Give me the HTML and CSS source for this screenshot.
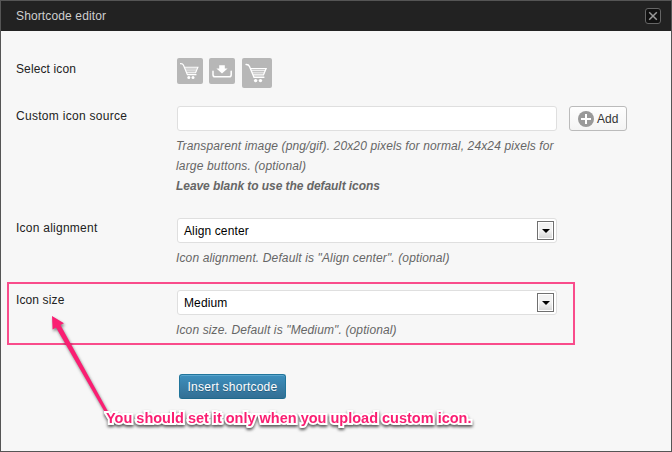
FILE: index.html
```html
<!DOCTYPE html>
<html lang="en">
<head>
<meta charset="utf-8">
<title>Shortcode editor</title>
<link rel="stylesheet" href="styles.css">
</head>
<body>
<svg class="defs" width="0" height="0" aria-hidden="true">
  <symbol id="cart" viewBox="0 0 26 26">
    <path d="M3.5 5.6q2.2-.2 3 1.7l3.9 9.4h8.6" fill="none" stroke="#fff" stroke-width="1.2" stroke-linecap="round"/>
    <path d="M7.3 9.2h13.6l-2.3 5.5H9.7" fill="none" stroke="#fff" stroke-width="1.1"/>
    <path d="M8 11h12.1M8.8 12.9h10.6" stroke="#fff" stroke-width=".8"/>
    <circle cx="11.8" cy="19.6" r="1.5" fill="#fff"/><circle cx="16" cy="19.6" r="1.5" fill="#fff"/>
  </symbol>
</svg>
<div class="dialog">
  <header class="titlebar">
    <span class="title">Shortcode editor</span>
    <button class="close" aria-label="Close"><svg width="14" height="14" viewBox="0 0 14 14"><path d="M3.2 3.2l7.6 7.6M10.8 3.2l-7.6 7.6" stroke="#999" stroke-width="1.5"/></svg></button>
  </header>
  <main class="form">
    <div class="row row-icons">
      <span class="label label-icons">Select icon</span>
      <div class="icons">
        <span class="tile"><svg width="26" height="26"><use href="#cart"/></svg></span>
        <span class="tile"><svg width="26" height="26" viewBox="0 0 26 26"><path d="M4 13.3v3.4q0 2.1 2.1 2.1h14q2.1 0 2.1-2.1v-3.4" fill="none" stroke="#fff" stroke-width="1.5" stroke-linecap="round"/><path d="M10.2 7.2h5.6v3.2h2.8L13 15.4l-5.6-5h2.8z" fill="#fff"/></svg></span>
        <span class="tile tile-large"><svg width="30" height="30"><use href="#cart"/></svg></span>
      </div>
    </div>
    <div class="row row-source">
      <span class="label label-source">Custom icon source</span>
      <div class="field">
        <div class="line"><span class="box"></span>
          <button class="add"><svg width="16" height="16" viewBox="0 0 16 16"><circle cx="8" cy="8" r="8" fill="#999"/><path d="M8 3v10M3 8h10" stroke="#fff" stroke-width="2"/></svg><span class="add-text">Add</span></button></div>
        <p class="desc"><span>Transparent image (png/gif). 20x20 pixels for normal, 24x24 pixels for</span><br><span class="second">large buttons. (optional)</span><br><b>Leave blank to use the default icons</b></p>
      </div>
    </div>
    <div class="row row-align">
      <span class="label label-align">Icon alignment</span>
      <div class="field">
        <div class="box select"><span>Align center</span><i class="drop"></i></div>
        <p class="desc">Icon alignment. Default is "Align center". (optional)</p>
      </div>
    </div>
    <div class="row row-size">
      <span class="label">Icon size</span>
      <div class="field">
        <div class="box select"><span>Medium</span><i class="drop"></i></div>
        <p class="desc">Icon size. Default is "Medium". (optional)</p>
      </div>
    </div>
    <button class="submit">Insert shortcode</button>
  </main>
  <div class="highlight"></div>
  <svg class="arrow" width="672" height="452" viewBox="0 0 672 452"><path d="M52 316l12 7.2-3.6 1.9L108 411.5l-2.8 1.2L56 327.5l-3.4 2z" fill="#fa1e72"/></svg>
  <div class="note">You should set it only when you upload custom icon.</div>
</div>
</body>
</html>
```
FILE: styles.css
```css
* { box-sizing: border-box; }
body { margin: 0; font: 12px/20px "Liberation Sans", Arial, sans-serif; color: #222; }
button { font: inherit; padding: 0; }
p { margin: 0; }
svg { display: block; }
.defs { position: absolute; }
.dialog { position: relative; width: 672px; height: 452px; border: 1px solid #555; background: #f7f7f7; overflow: hidden; }
.titlebar { height: 30px; padding: 0 10px 0 15px; background: #222; color: #cfcfcf; letter-spacing: .13px; display: flex; align-items: center; justify-content: space-between; }
.close { width: 16px; height: 16px; border: 1px solid #666; border-radius: 3px; background: #111; display: grid; place-items: center; }
.form { padding: 27px 15px 0; display: flex; flex-direction: column; }
.row { display: grid; grid-template-columns: 161px 1fr; }
.row-icons { height: 48px; }
.row-source { height: 112px; }
.row-align { height: 72px; }
.row-size { height: 84px; }
.label { color: #222; white-space: nowrap; letter-spacing: .12px; }
.label-icons { padding-top: 1px; }
.label-source { letter-spacing: .29px; }
.label-align { letter-spacing: .25px; }
.icons { display: flex; align-items: flex-start; gap: 6px; }
.tile { background: #b7b7b7; border-radius: 2px; }
.tile-large { margin-left: 1px; }
.line { display: flex; gap: 12px; }
.box { width: 380px; height: 25px; background: #fff; border: 1px solid #dfdfdf; border-radius: 3px; }
.add { width: 58px; height: 25px; border: 1px solid #bbb; border-radius: 3px; background: linear-gradient(#fefefe, #f4f4f4); color: #333; display: flex; align-items: center; padding-left: 8px; gap: 3px; }
.desc { padding-top: 5px; margin-left: -1px; color: #666; font-style: italic; white-space: nowrap; letter-spacing: .13px; }
.desc .second { letter-spacing: .16px; }
.desc b { letter-spacing: -.06px; }
.select { display: flex; align-items: center; justify-content: space-between; padding: 0 2px 0 6px; color: #000; letter-spacing: .12px; }
.drop { width: 17px; height: 19px; border: 1px solid #707070; background: linear-gradient(#f2f2f2 50%, #d4d4d4); box-shadow: inset 0 0 0 1px #fff; display: grid; place-items: center; }
.drop::after { content: ""; border: 4px solid transparent; border-top-color: #000; border-bottom: 0; }
.submit { width: 107px; height: 25px; margin-left: 163px; border: 1px solid #21759b; border-bottom-color: #1e6a8d; border-radius: 3px; background: linear-gradient(#3d8fbd, #336f94); box-shadow: inset 0 1px 0 #5aa5cd; color: #fff; text-shadow: 0 1px 0 rgba(0,0,0,.25); white-space: nowrap; letter-spacing: .24px; }
.highlight { position: absolute; left: 6px; top: 281px; width: 568px; height: 63px; border: 2px solid #f94c8b; }
.arrow { position: absolute; left: -1px; top: -1px; filter: drop-shadow(1px 2px 1.5px rgba(0,0,0,.5)); }
.note { position: absolute; left: 105px; top: 407px; color: #fa1e72; font-size: 14.5px; font-weight: bold; white-space: nowrap; paint-order: stroke fill; -webkit-text-stroke: 4px #fff; filter: drop-shadow(0 2px 1.5px rgba(0,0,0,.65)); }
```
